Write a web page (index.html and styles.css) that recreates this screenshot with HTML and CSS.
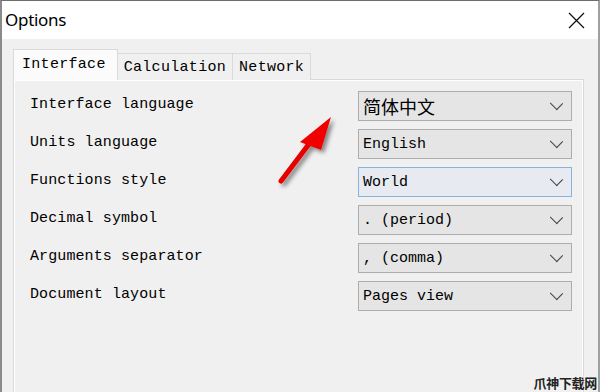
FILE: index.html
```html
<!DOCTYPE html>
<html lang="en">

<head>
    <meta charset="UTF-8">
    <title>Options</title>
    <link rel="stylesheet" href="styles.css">
</head>

<body>
    <div class="window">
        <!-- Title bar -->
        <div class="titlebar">
            <span class="title">Options</span>
            <svg class="close" width="17" height="17" viewBox="0 0 17 17">
                <path d="M1 1 L16 16 M16 1 L1 16" stroke="#111" stroke-width="1.3" fill="none" />
            </svg>
        </div>

        <div class="content">
            <!-- Tabs -->
            <div class="tabs">
                <div class="tab active">Interface</div>
                <div class="tab">Calculation</div>
                <div class="tab">Network</div>
            </div>

            <!-- Interface settings -->
            <div class="panel">
                <div class="row">
                    <span class="label">Interface language</span>
                    <div class="combo"><span class="cjk">简体中文</span><i class="chevron"></i></div>
                </div>
                <div class="row">
                    <span class="label">Units language</span>
                    <div class="combo"><span>English</span><i class="chevron"></i></div>
                </div>
                <div class="row">
                    <span class="label">Functions style</span>
                    <div class="combo focused"><span>World</span><i class="chevron"></i></div>
                </div>
                <div class="row">
                    <span class="label">Decimal symbol</span>
                    <div class="combo"><span>. (period)</span><i class="chevron"></i></div>
                </div>
                <div class="row">
                    <span class="label">Arguments separator</span>
                    <div class="combo"><span>, (comma)</span><i class="chevron"></i></div>
                </div>
                <div class="row">
                    <span class="label">Document layout</span>
                    <div class="combo"><span>Pages view</span><i class="chevron"></i></div>
                </div>
            </div>
        </div>

        <!-- Red pointer arrow over the dialog -->
        <svg class="pointer" width="80" height="90" viewBox="260 100 80 90">
            <defs>
                <filter id="shade" x="-30%" y="-30%" width="160%" height="160%">
                    <feDropShadow dx="3" dy="3" stdDeviation="2" flood-color="#000" flood-opacity="0.45" />
                </filter>
            </defs>
            <g filter="url(#shade)">
                <path d="M281 181 L312 140" stroke="#e60000" stroke-width="5" stroke-linecap="round" />
                <path d="M331 117 L300 142 L321 150 Z" fill="#f00000" />
            </g>
        </svg>

        <span class="watermark">爪神下载网</span>
    </div>
</body>

</html>
```

FILE: styles.css
```css
body {
    margin: 0;
    background: #ffffff;
    font-family: 'Liberation Mono', 'Noto Sans CJK SC', monospace;
}

.window {
    position: relative;
    width: 596px;
    height: 391px;
    border-top: 1px solid #6d6d6d;
    border-left: 2px solid #8a8a8a;
    border-right: 2px solid #a0a0a0;
    background: #f0f0f0;
    overflow: hidden;
}

.titlebar {
    height: 38px;
    background: #ffffff;
    display: flex;
    align-items: center;
    justify-content: space-between;
    padding: 0 13px 0 3px;
}

.title {
    font-family: 'Noto Sans', sans-serif;
    font-size: 17px;
    letter-spacing: -0.3px;
    color: #000;
    margin-top: -2px;
}

.close {
    margin-top: 1px;
}

.content {
    padding: 10px 14px 0 11px;
}

.tabs {
    display: flex;
    align-items: flex-end;
    height: 31px;
    margin-bottom: -1px;
    position: relative;
}

.tab {
    height: 26px;
    line-height: 27px;
    padding: 0 6px 0 6px;
    font-size: 15px;
    letter-spacing: 0.3px;
    color: #000;
    background: #f0f0f0;
    border: 1px solid #dadada;
    border-bottom: none;
    margin-left: -1px;
}

.tab.active {
    height: 30px;
    line-height: 29px;
    padding: 0 11px 0 8px;
    background: #fbfbfb;
    margin-left: 0;
    position: relative;
    z-index: 1;
}

.panel {
    height: 306px;
    border: 1px solid #d9d9d9;
    box-shadow: inset 1px 1px 0 #ffffff, inset -1px -1px 0 #ffffff;
    padding: 11px 11px 0 16px;
    display: flex;
    flex-direction: column;
    gap: 8px;
}

.row {
    display: flex;
    align-items: center;
    justify-content: space-between;
}

.label {
    font-size: 15px;
    letter-spacing: 0.1px;
    color: #000;
    margin-top: -4px;
}

.combo {
    width: 201px;
    height: 28px;
    border: 1px solid #adadad;
    background: #e5e5e5;
    display: flex;
    align-items: center;
    justify-content: space-between;
    padding: 0 7px 0 4px;
    font-size: 15px;
    color: #000;
}

.combo.focused {
    background: #e7ebf1;
    border-color: #86b4df;
}

.combo .cjk {
    font-size: 18px;
}

.chevron {
    width: 8px;
    height: 8px;
    border-right: 1.5px solid #444;
    border-bottom: 1.5px solid #444;
    transform: rotate(45deg) scaleX(1.1);
    margin: -5px 3px 0 0;
}

.pointer {
    position: absolute;
    left: 258px;
    top: 99px;
}

.watermark {
    position: absolute;
    right: 1px;
    bottom: 0;
    font-family: 'Noto Sans CJK SC', sans-serif;
    font-size: 13px;
    line-height: 18px;
    font-weight: bold;
    color: #222;
    letter-spacing: -0.3px;
}
```
